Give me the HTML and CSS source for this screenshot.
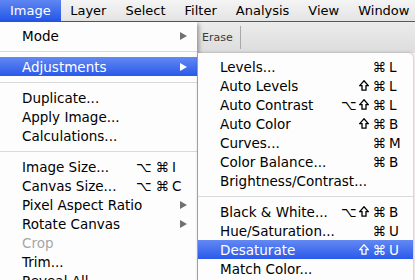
FILE: index.html
```html
<!DOCTYPE html>
<html>
<head>
<meta charset="utf-8">
<link rel="stylesheet" href="styles.css">
</head>
<body>
<div class="screen">
  <div class="menubar">
    <span class="mb-item active">Image</span>
    <span class="mb-item">Layer</span>
    <span class="mb-item">Select</span>
    <span class="mb-item">Filter</span>
    <span class="mb-item">Analysis</span>
    <span class="mb-item">View</span>
    <span class="mb-item">Window</span>
  </div>
  <div class="toolbar">
    <span class="tool-label">Erase</span>
    <span class="tool-sep"></span>
  </div>
  <div class="document"></div>

  <div class="menu main-menu">
    <div class="row"><span class="label">Mode</span><svg class="arrow" width="7" height="8" viewBox="0 0 7 8"><polygon points="0,0 7,4 0,8"/></svg></div>
    <div class="sep"></div>
    <div class="row selected"><span class="label">Adjustments</span><svg class="arrow" width="7" height="8" viewBox="0 0 7 8"><polygon points="0,0 7,4 0,8"/></svg></div>
    <div class="sep"></div>
    <div class="row"><span class="label">Duplicate...</span></div>
    <div class="row"><span class="label">Apply Image...</span></div>
    <div class="row"><span class="label">Calculations...</span></div>
    <div class="sep"></div>
    <div class="row"><span class="label">Image Size...</span><span class="mods"><span class="opt">⌥</span><span class="cmd">⌘</span></span><span class="key">I</span></div>
    <div class="row"><span class="label">Canvas Size...</span><span class="mods"><span class="opt">⌥</span><span class="cmd">⌘</span></span><span class="key">C</span></div>
    <div class="row"><span class="label">Pixel Aspect Ratio</span><svg class="arrow" width="7" height="8" viewBox="0 0 7 8"><polygon points="0,0 7,4 0,8"/></svg></div>
    <div class="row"><span class="label">Rotate Canvas</span><svg class="arrow" width="7" height="8" viewBox="0 0 7 8"><polygon points="0,0 7,4 0,8"/></svg></div>
    <div class="row disabled"><span class="label">Crop</span></div>
    <div class="row"><span class="label">Trim...</span></div>
    <div class="row"><span class="label">Reveal All</span></div>
  </div>

  <div class="menu sub-menu">
    <div class="row"><span class="label">Levels...</span><span class="mods"><span class="cmd">⌘</span></span><span class="key">L</span></div>
    <div class="row"><span class="label">Auto Levels</span><span class="mods"><svg class="shift" width="10" height="11" viewBox="0 0 10 11"><path d="M5 0.8 L9.3 5.6 L7 5.6 L7 10.2 L3 10.2 L3 5.6 L0.7 5.6 Z"/></svg><span class="cmd">⌘</span></span><span class="key">L</span></div>
    <div class="row"><span class="label">Auto Contrast</span><span class="mods"><span class="opt">⌥</span><svg class="shift" width="10" height="11" viewBox="0 0 10 11"><path d="M5 0.8 L9.3 5.6 L7 5.6 L7 10.2 L3 10.2 L3 5.6 L0.7 5.6 Z"/></svg><span class="cmd">⌘</span></span><span class="key">L</span></div>
    <div class="row"><span class="label">Auto Color</span><span class="mods"><svg class="shift" width="10" height="11" viewBox="0 0 10 11"><path d="M5 0.8 L9.3 5.6 L7 5.6 L7 10.2 L3 10.2 L3 5.6 L0.7 5.6 Z"/></svg><span class="cmd">⌘</span></span><span class="key">B</span></div>
    <div class="row"><span class="label">Curves...</span><span class="mods"><span class="cmd">⌘</span></span><span class="key">M</span></div>
    <div class="row"><span class="label">Color Balance...</span><span class="mods"><span class="cmd">⌘</span></span><span class="key">B</span></div>
    <div class="row"><span class="label">Brightness/Contrast...</span></div>
    <div class="sep"></div>
    <div class="row"><span class="label">Black &amp; White...</span><span class="mods"><span class="opt">⌥</span><svg class="shift" width="10" height="11" viewBox="0 0 10 11"><path d="M5 0.8 L9.3 5.6 L7 5.6 L7 10.2 L3 10.2 L3 5.6 L0.7 5.6 Z"/></svg><span class="cmd">⌘</span></span><span class="key">B</span></div>
    <div class="row"><span class="label">Hue/Saturation...</span><span class="mods"><span class="cmd">⌘</span></span><span class="key">U</span></div>
    <div class="row selected"><span class="label">Desaturate</span><span class="mods"><svg class="shift" width="10" height="11" viewBox="0 0 10 11"><path d="M5 0.8 L9.3 5.6 L7 5.6 L7 10.2 L3 10.2 L3 5.6 L0.7 5.6 Z"/></svg><span class="cmd">⌘</span></span><span class="key">U</span></div>
    <div class="row"><span class="label">Match Color...</span></div>
  </div>
</div>
</body>
</html>
```

FILE: styles.css
```css
html, body {
  margin: 0;
  padding: 0;
}
body {
  width: 415px;
  height: 280px;
  overflow: hidden;
  background: #f7eff1;
  font-family: "DejaVu Sans", "Noto Sans", sans-serif;
}
.screen {
  position: relative;
  width: 415px;
  height: 280px;
  overflow: hidden;
  display: flex;
  flex-direction: column;
}
.menubar {
  height: 21px;
  border-bottom: 1px solid #7b4753;
  background: linear-gradient(to bottom, #f4f4f4, #e4e4e4);
  display: flex;
  align-items: stretch;
  font-size: 13px;
  color: #000;
}
.mb-item {
  display: flex;
  align-items: center;
  padding: 0 9.5px;
}
.mb-item.active {
  padding: 0 10px;
  color: #fff;
  background: linear-gradient(to bottom, #5f86f2, #2456e9);
}
.toolbar {
  height: 31px;
  background: linear-gradient(to bottom, #ececec, #dcdcdc);
  display: flex;
  align-items: center;
  padding-left: 202px;
  gap: 7px;
}
.tool-label {
  font-size: 11px;
  color: #3a3a3a;
}
.tool-sep {
  width: 1px;
  height: 23px;
  background: #a8a8a8;
}
.document {
  flex: 1;
  background: #f8f0f2;
}
.menu {
  position: absolute;
  background: #fdfdfd;
  font-size: 13.5px;
  color: #000;
  padding-top: 4px;
  box-sizing: border-box;
}
.main-menu {
  left: 0;
  top: 22px;
  width: 197px;
  height: 280px;
  box-shadow: 2px 2px 4px rgba(0, 0, 0, 0.35);
  z-index: 1;
}
.sub-menu {
  left: 198px;
  top: 53px;
  width: 215px;
  height: 240px;
  border-top-right-radius: 5px;
  box-shadow: 0 0 3px rgba(0, 0, 0, 0.3);
  z-index: 2;
}
.row {
  height: 19px;
  display: flex;
  align-items: center;
  padding-left: 22px;
  padding-right: 10px;
  white-space: nowrap;
}
.label {
  flex: 1;
}
.mods {
  display: flex;
  align-items: center;
  gap: 2px;
}
.mods .cmd {
  margin-left: 2px;
}
.shift {
  flex: none;
  fill: none;
  stroke: currentColor;
  stroke-width: 1.3;
  stroke-linejoin: miter;
}
.key {
  width: 15px;
  margin-left: 3px;
}
.sub-menu .key {
  width: 14px;
}
.arrow {
  fill: #717171;
  flex: none;
}
.row.selected {
  color: #fff;
  background: linear-gradient(to bottom, #6389f3, #2a59ea);
}
.row.selected .arrow {
  fill: #fff;
}
.row.disabled {
  color: #a6a6a6;
}
.sep {
  height: 12px;
  display: flex;
  align-items: center;
}
.sep::before {
  content: "";
  flex: 1;
  height: 1px;
  background: #dadada;
}
```
